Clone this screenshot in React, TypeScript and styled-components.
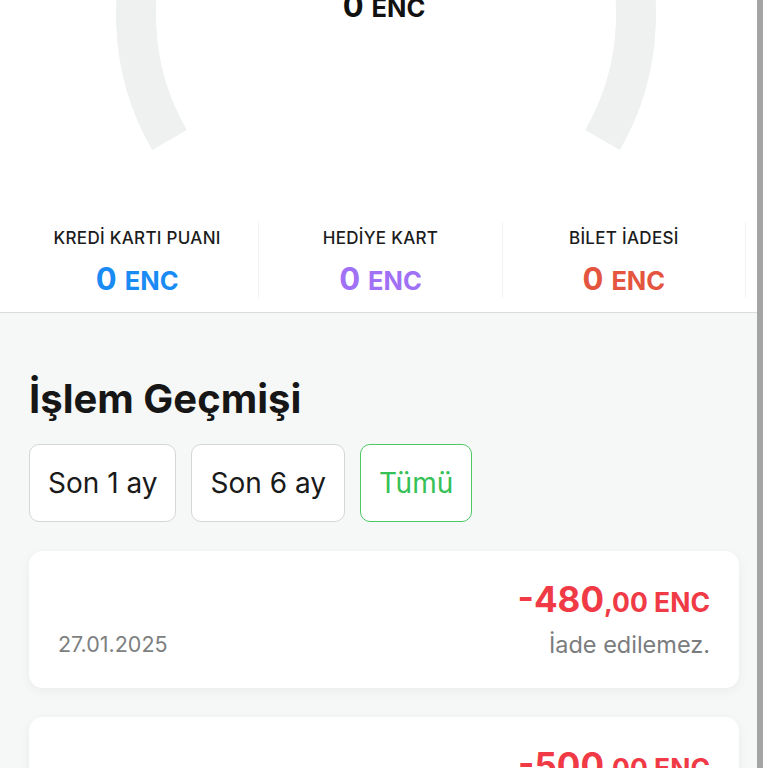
import React from 'react'
import styled, { createGlobalStyle } from 'styled-components'

const GlobalStyle = createGlobalStyle`
  html, body {
    margin: 0;
    padding: 0;
    background: #f6f7f7;
    font-family: 'Inter', 'Roboto', sans-serif;
    overflow: hidden;
  }
`

const Page = styled.div`
  position: relative;
  width: 768px;
  height: 768px;
  overflow: hidden;
  background: #f6f7f7;
`

const TopSection = styled.div`
  background: #ffffff;
  border-bottom: 1px solid #dcdcdc;
  padding-bottom: 14px;
`

const GaugeWrap = styled.div`
  position: relative;
  height: 222px;
`

const GaugeValue = styled.div`
  position: absolute;
  top: -9px;
  left: 0;
  right: 0;
  text-align: center;
  color: #111;
  line-height: 30px;
`

const BigNum = styled.span<{ color: string }>`
  font-size: 31px;
  font-weight: 700;
  color: ${(p) => p.color};
`

const Unit = styled.span<{ color: string }>`
  font-size: 25.5px;
  font-weight: 700;
  color: ${(p) => p.color};
  margin-left: 8px;
`

const StatsRow = styled.div`
  display: grid;
  grid-template-columns: repeat(3, 1fr);
  padding: 0 22px 0 16px;
`

const Stat = styled.div`
  display: flex;
  flex-direction: column;
  align-items: center;
  height: 76px;
  padding-top: 6px;
  box-sizing: border-box;
  border-right: 1px solid #f3f3f3;
`

const StatLabel = styled.div`
  font-size: 17px;
  font-weight: 500;
  color: #1c1c1c;
  line-height: 20px;
  letter-spacing: 0.3px;
`

const StatValue = styled.div`
  margin-top: 13px;
  line-height: 36px;
`

const History = styled.div`
  padding: 64px 29px 0 29px;
`

const Title = styled.h2`
  margin: 0;
  font-size: 40px;
  line-height: 44px;
  font-weight: 700;
  color: #161616;
`

const Filters = styled.div`
  display: flex;
  gap: 15px;
  margin-top: 23px;
`

const FilterButton = styled.button<{ active?: boolean }>`
  height: 78px;
  padding: 0 18px;
  border-radius: 10px;
  background: #ffffff;
  border: 1px solid ${(p) => (p.active ? '#4cc766' : '#d6d6d6')};
  color: ${(p) => (p.active ? '#35c156' : '#1a1a1a')};
  font-family: 'Inter', 'Roboto', sans-serif;
  font-size: 28px;
  font-weight: 400;
`

const Cards = styled.div`
  display: flex;
  flex-direction: column;
  gap: 29px;
  margin-top: 29px;
`

const Card = styled.div`
  display: flex;
  justify-content: space-between;
  align-items: flex-end;
  background: #ffffff;
  border-radius: 14px;
  padding: 28px 29px;
  box-shadow: 0 3px 12px rgba(0, 0, 0, 0.05);
`

const DateText = styled.div`
  font-size: 21.5px;
  color: #7d7f80;
  line-height: 30px;
  margin-bottom: 1px;
`

const RightCol = styled.div`
  display: flex;
  flex-direction: column;
  align-items: flex-end;
`

const Amount = styled.div`
  color: #f03a46;
  font-weight: 700;
  line-height: 40px;
`

const AmountMain = styled.span`
  font-size: 35px;
`

const AmountRest = styled.span`
  font-size: 26.5px;
`

const Status = styled.div`
  margin-top: 4px;
  font-size: 23.5px;
  color: #7a7c7d;
  line-height: 30px;
`

const ScrollBar = styled.div`
  position: absolute;
  top: 0;
  right: 0;
  width: 11px;
  height: 100%;
  background: #ffffff;
  border-left: 6px solid #a4a4a4;
  box-sizing: border-box;
`

type StatItem = { label: string; color: string }

const stats: StatItem[] = [
  { label: 'KREDİ KARTI PUANI', color: '#1a8bf5' },
  { label: 'HEDİYE KART', color: '#a070f5' },
  { label: 'BİLET İADESİ', color: '#e4553f' }
]

type Tx = { main: string; rest: string; date: string; note: string }

const txs: Tx[] = [
  { main: '-480', rest: ',00 ENC', date: '27.01.2025', note: 'İade edilemez.' },
  { main: '-500', rest: ',00 ENC', date: '20.01.2025', note: 'İade edilemez.' }
]

function Gauge() {
  // 240 degree arc, only the lower part is visible (page is scrolled)
  const cx = 386
  const cy = 15
  const r = 250
  const sx = cx - r * Math.cos(Math.PI / 6)
  const sy = cy + r * Math.sin(Math.PI / 6)
  const ex = cx + r * Math.cos(Math.PI / 6)
  return (
    <svg width="768" height="222" viewBox="0 0 768 222" style={{ display: 'block' }}>
      <path
        d={`M ${sx} ${sy} A ${r} ${r} 0 1 1 ${ex} ${sy}`}
        fill="none"
        stroke="#eef1f0"
        strokeWidth={40}
      />
    </svg>
  )
}

export default function App() {
  return (
    <Page>
      <GlobalStyle />
      <TopSection>
        <GaugeWrap>
          <Gauge />
          <GaugeValue>
            <BigNum color="#111">0</BigNum>
            <Unit color="#111">ENC</Unit>
          </GaugeValue>
        </GaugeWrap>
        <StatsRow>
          {stats.map((s) => (
            <Stat key={s.label}>
              <StatLabel>{s.label}</StatLabel>
              <StatValue>
                <BigNum color={s.color}>0</BigNum>
                <Unit color={s.color}>ENC</Unit>
              </StatValue>
            </Stat>
          ))}
        </StatsRow>
      </TopSection>

      <History>
        <Title>İşlem Geçmişi</Title>
        <Filters>
          <FilterButton>Son 1 ay</FilterButton>
          <FilterButton>Son 6 ay</FilterButton>
          <FilterButton active>Tümü</FilterButton>
        </Filters>
        <Cards>
          {txs.map((t) => (
            <Card key={t.main}>
              <DateText>{t.date}</DateText>
              <RightCol>
                <Amount>
                  <AmountMain>{t.main}</AmountMain>
                  <AmountRest>{t.rest}</AmountRest>
                </Amount>
                <Status>{t.note}</Status>
              </RightCol>
            </Card>
          ))}
        </Cards>
      </History>
      <ScrollBar />
    </Page>
  )
}
